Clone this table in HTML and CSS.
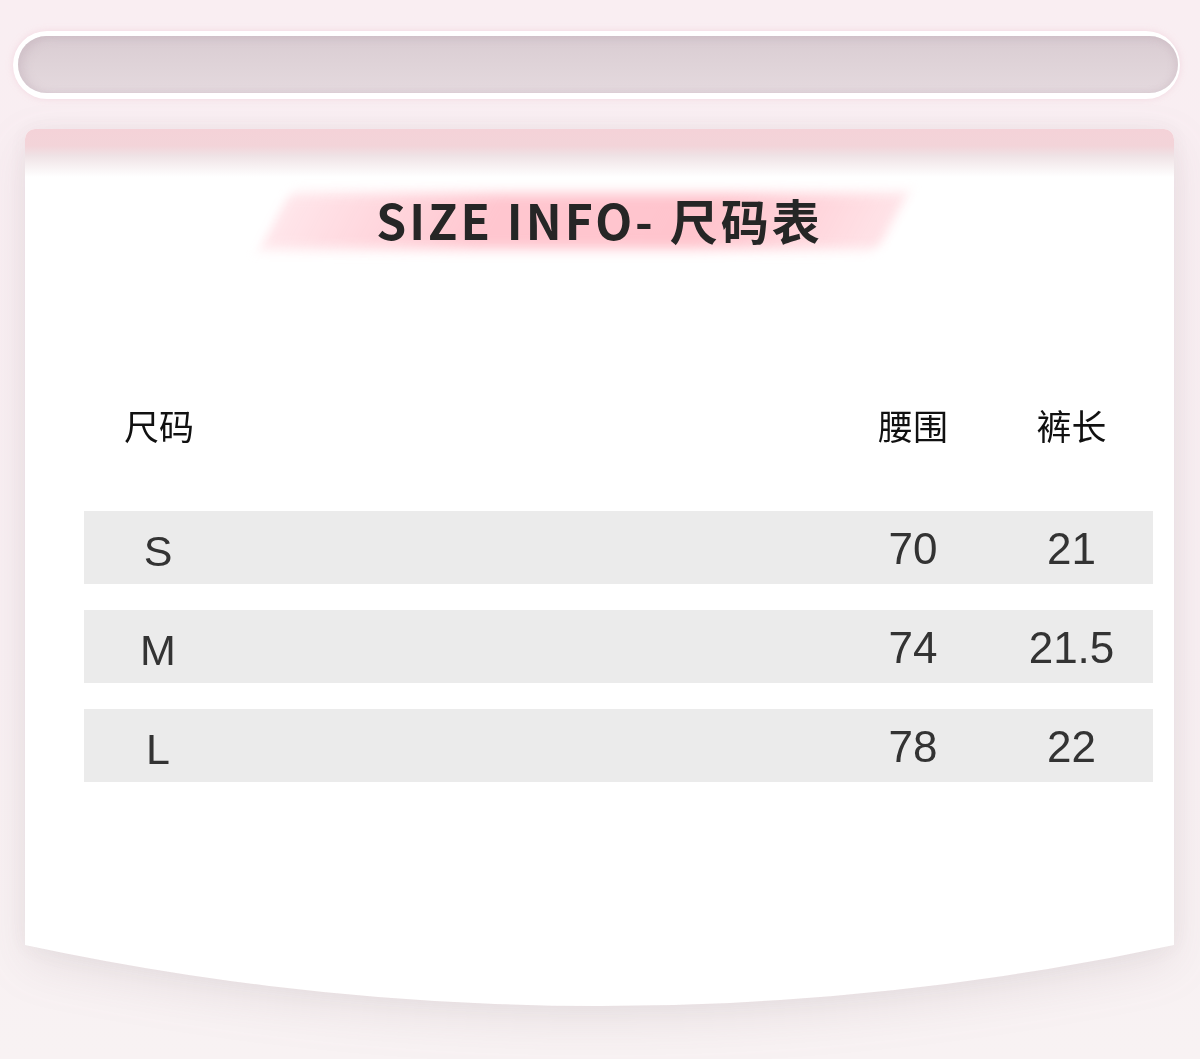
FILE: index.html
```html
<!DOCTYPE html>
<html lang="zh">
<head>
<meta charset="utf-8">
<link rel="stylesheet" href="styles.css">
</head>
<body>
<div class="page">
  <div class="pill"><div class="pill-inner"></div></div>
  <div class="card-wrap">
    <div class="card">
      <div class="card-top"></div>
      <div class="title-row">
        <div class="title-wrap">
          <div class="title-bg"></div>
          <h1 class="title">SIZE INFO- 尺码表</h1>
        </div>
      </div>
      <div class="table">
        <div class="thead">
          <span>尺码</span><span></span><span>腰围</span><span>裤长</span>
        </div>
        <div class="trow"><span class="size">S</span><span></span><span>70</span><span>21</span></div>
        <div class="trow"><span class="size">M</span><span></span><span>74</span><span>21.5</span></div>
        <div class="trow"><span class="size">L</span><span></span><span>78</span><span>22</span></div>
      </div>
    </div>
    <svg class="card-foot" viewBox="0 0 1149 62" preserveAspectRatio="none" aria-hidden="true">
      <path d="M0 0 H1149 A2736 2736 0 0 1 0 0 Z" fill="#ffffff"/>
    </svg>
  </div>
</div>
</body>
</html>
```

FILE: styles.css
```css
html, body {
  margin: 0;
  padding: 0;
}
body {
  width: 1200px;
  height: 1059px;
  overflow: hidden;
  background: linear-gradient(180deg, #f9eef2 0%, #f8eff2 60%, #f8f2f3 100%);
  font-family: "Noto Sans CJK SC", "Noto Sans", sans-serif;
}
.page {
  padding-top: 31px;
}
.pill {
  margin-left: 13px;
  width: 1167px;
  height: 68px;
  box-sizing: border-box;
  border-radius: 34px;
  background: #ffffff;
  padding: 5px 2px 6px 5px;
  box-shadow: 0 0 6px rgba(240, 200, 212, 0.6);
}
.pill-inner {
  height: 100%;
  border-radius: 30px;
  background: linear-gradient(180deg, #d9ccd2 0%, #dfd3d8 50%, #e4d9de 100%);
  box-shadow: inset 6px 2px 8px rgba(190, 170, 180, 0.35), inset -4px 0 6px rgba(200, 180, 190, 0.3);
}
.card-wrap {
  margin: 30px 0 0 25px;
  width: 1149px;
  filter: drop-shadow(0 16px 22px rgba(120, 100, 110, 0.11)) drop-shadow(0 0 10px rgba(120, 100, 110, 0.06));
}
.card {
  background: #ffffff;
  border-radius: 10px 10px 0 0;
  height: 816px;
  position: relative;
  overflow: hidden;
}
.card-top {
  height: 48px;
  background: linear-gradient(180deg, #f4d2d8 0%, #f3d4d9 35%, #efe2e5 55%, #ffffff 100%);
}
.title-row {
  display: flex;
  justify-content: center;
  margin-top: 10px;
}
.title-wrap {
  position: relative;
  width: 650px;
  height: 70px;
  display: flex;
  justify-content: center;
  align-items: center;
}
.title-bg {
  position: absolute;
  left: 0;
  top: 6px;
  width: 618px;
  height: 56px;
  background: linear-gradient(90deg, rgba(255,200,210,0.45) 0%, #ffc6cf 35%, #ffc4cd 70%, rgba(255,205,213,0.55) 100%);
  transform: skewX(-28deg);
  filter: blur(6px);
}
.title {
  position: relative;
  margin: -6px 0 0 0;
  font-family: "Noto Sans CJK SC", "Noto Sans", sans-serif;
  font-weight: 700;
  font-size: 48px;
  letter-spacing: 3px;
  color: #262626;
  line-height: 70px;
}
.table {
  margin: 0 21px 0 59px;
  padding-top: 131px;
}
.thead, .trow {
  display: grid;
  grid-template-columns: 148px 1fr 154px 163px;
  align-items: center;
  text-align: center;
}
.thead {
  height: 72px;
  font-family: "Noto Sans CJK SC", sans-serif;
  font-size: 35px;
  color: #111111;
  margin-bottom: 51px;
}
.thead span:first-child {
  padding-left: 2px;
}
.trow {
  height: 73px;
  background: #ebebeb;
  margin-bottom: 26px;
  font-family: "Liberation Sans", Arial, sans-serif;
  font-size: 44px;
  color: #333333;
}
.trow span {
  line-height: 1;
  padding-top: 2px;
}
.trow .size {
  padding-top: 7px;
  font-size: 43px;
}
.card-foot {
  display: block;
  width: 1149px;
  height: 62px;
}
```
